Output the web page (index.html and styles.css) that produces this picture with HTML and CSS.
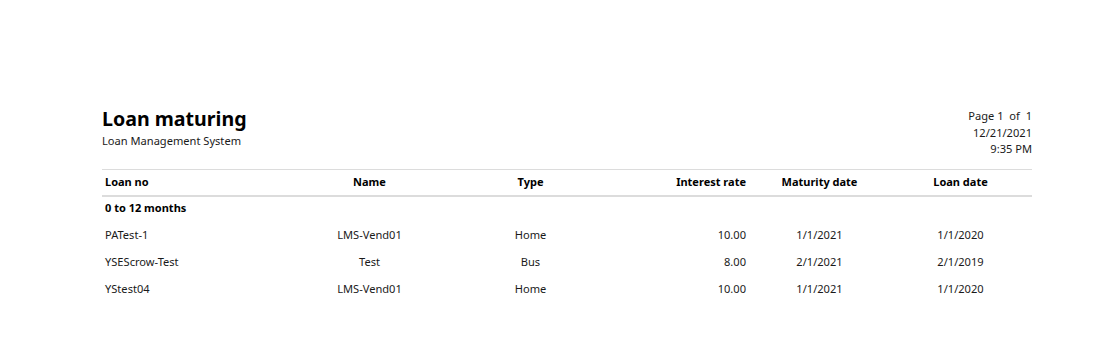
FILE: index.html
```html
<!DOCTYPE html>
<html lang="en">
<head>
<meta charset="utf-8">
<title>Loan maturing</title>
<link rel="stylesheet" href="styles.css">
</head>
<body>
<div class="report">
  <div class="report-head">
    <div class="titles">
      <h1 class="title">Loan maturing</h1>
      <div class="subtitle">Loan Management System</div>
    </div>
    <div class="meta">
      <div>Page 1&nbsp; of&nbsp; 1</div>
      <div>12/21/2021</div>
      <div>9:35 PM</div>
    </div>
  </div>
  <table class="grid">
    <colgroup>
      <col class="c1"><col class="c2"><col class="c3"><col class="c4"><col class="c5"><col class="c6">
    </colgroup>
    <thead>
      <tr>
        <th class="left">Loan no</th>
        <th class="center">Name</th>
        <th class="center">Type</th>
        <th class="right">Interest rate</th>
        <th class="center">Maturity date</th>
        <th class="center">Loan date</th>
      </tr>
    </thead>
    <tbody>
      <tr class="group"><td colspan="6">0 to 12 months</td></tr>
      <tr>
        <td class="left">PATest-1</td>
        <td class="center">LMS-Vend01</td>
        <td class="center">Home</td>
        <td class="right">10.00</td>
        <td class="center">1/1/2021</td>
        <td class="center">1/1/2020</td>
      </tr>
      <tr>
        <td class="left">YSEScrow-Test</td>
        <td class="center">Test</td>
        <td class="center">Bus</td>
        <td class="right">8.00</td>
        <td class="center">2/1/2021</td>
        <td class="center">2/1/2019</td>
      </tr>
      <tr>
        <td class="left">YStest04</td>
        <td class="center">LMS-Vend01</td>
        <td class="center">Home</td>
        <td class="right">10.00</td>
        <td class="center">1/1/2021</td>
        <td class="center">1/1/2020</td>
      </tr>
    </tbody>
  </table>
</div>
</body>
</html>
```
FILE: styles.css
```css
html, body {
  margin: 0;
  padding: 0;
  background: #fff;
}
body {
  font-family: "Noto Sans", "Open Sans", sans-serif;
  color: #1a1a1a;
  font-size: 11.1px;
}
.report {
  width: 930px;
  margin-left: 102px;
  padding-top: 104px;
}
.report-head {
  display: flex;
  justify-content: space-between;
  align-items: flex-start;
  margin-bottom: 11.5px;
}
.titles {
  padding-top: 2px;
}
.title {
  margin: 0;
  font-size: 19.6px;
  font-weight: 700;
  line-height: 26px;
  color: #000;
}
.subtitle {
  line-height: 16px;
  padding-top: 1px;
}
.meta {
  text-align: right;
  line-height: 16.5px;
  padding-top: 4px;
}
.grid {
  width: 930px;
  border-collapse: collapse;
  table-layout: fixed;
}
.c1 { width: 178px; }
.c2 { width: 180px; }
.c3 { width: 142px; }
.c4 { width: 148px; }
.c5 { width: 140px; }
.c6 { width: 142px; }
.grid thead tr {
  border-top: 1px solid #dcdcdc;
  border-bottom: 2px solid #dcdcdc;
}
.grid th {
  font-size: 11px;
  font-weight: 700;
  color: #000;
  line-height: 23px;
  padding: 0 4px 2px 3px;
}
.grid td {
  line-height: 27px;
  padding: 0 4px 0 3px;
}
.grid .group td {
  font-size: 11px;
  font-weight: 700;
  color: #000;
  line-height: 21px;
  padding-bottom: 3px;
}
.left { text-align: left; }
.center { text-align: center; }
.right { text-align: right; }
```
